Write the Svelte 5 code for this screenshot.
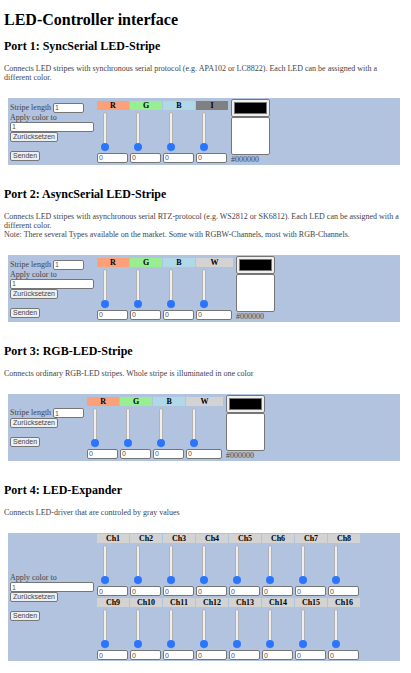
<script>
  const rgb = [
    { name: 'R', tone: 'red' },
    { name: 'G', tone: 'green' },
    { name: 'B', tone: 'blue' },
  ];
  const expander = Array.from({ length: 16 }, (_, i) => ({ name: `Ch${i + 1}`, tone: 'light' }));

  const ports = [
    {
      id: 1,
      title: 'Port 1: SyncSerial LED-Stripe',
      lines: [
        'Connects LED stripes with synchronous serial protocol (e.g. APA102 or LC8822). Each LED can be assigned with a different color.',
      ],
      length: true,
      apply: true,
      color: true,
      rows: [[...rgb, { name: 'I', tone: 'gray' }]],
    },
    {
      id: 2,
      title: 'Port 2: AsyncSerial LED-Stripe',
      lines: [
        'Connects LED stripes with asynchronous serial RTZ-protocol (e.g. WS2812 or SK6812). Each LED can be assigned with a different color.',
        'Note: There several Types available on the market. Some with RGBW-Channels, most with RGB-Channels.',
      ],
      length: true,
      apply: true,
      color: true,
      rows: [[...rgb, { name: 'W', tone: 'light', wide: true }]],
    },
    {
      id: 3,
      title: 'Port 3: RGB-LED-Stripe',
      lines: ['Connects ordinary RGB-LED stripes. Whole stripe is illuminated in one color'],
      length: true,
      apply: false,
      color: true,
      rows: [[...rgb, { name: 'W', tone: 'light', wide: true }]],
    },
    {
      id: 4,
      title: 'Port 4: LED-Expander',
      lines: ['Connects LED-driver that are controled by gray values'],
      length: false,
      apply: true,
      color: false,
      rows: [expander.slice(0, 8), expander.slice(8)],
    },
  ];

  let values = $state({});
  let colors = $state({ 1: '#000000', 2: '#000000', 3: '#000000' });

  const key = (port, channel) => `p${port.id}-${channel.name}`;
  const setValue = (k, e) => (values[k] = e.currentTarget.value);

  function reset(port) {
    for (const row of port.rows) for (const c of row) values[key(port, c)] = '0';
    if (port.color) colors[port.id] = '#000000';
  }
</script>

<main>
  <h1>LED-Controller interface</h1>

  {#each ports as port (port.id)}
    <section>
      <h2>{port.title}</h2>
      <div class="about">
        {#each port.lines as line}<p>{line}</p>{/each}
      </div>

      <form class="panel" onsubmit={(e) => e.preventDefault()}>
        <div class="settings">
          {#if port.length}
            <div class="length">
              <label for="length-{port.id}">Stripe length</label>
              <input id="length-{port.id}" class="text" type="text" value="1" />
            </div>
          {/if}
          {#if port.apply}
            <label class="apply" for="apply-{port.id}">Apply color to</label>
            <input id="apply-{port.id}" class="text target" type="text" value="1" />
          {/if}
          <button type="button" onclick={() => reset(port)}>Zurücksetzen</button>
          <button class="send" type="submit">Senden</button>
        </div>

        <div class="bank">
          {#each port.rows as row}
            <div class="row">
              {#each row as channel (channel.name)}
                {@const k = key(port, channel)}
                <div class="channel" class:wide={channel.wide}>
                  <label class="name {channel.tone}" for={k}>{channel.name}</label>
                  <input
                    class="slider"
                    type="range"
                    min="0"
                    max="255"
                    aria-label="{channel.name} level"
                    value={values[k] ?? '0'}
                    oninput={(e) => setValue(k, e)}
                  />
                  <input
                    id={k}
                    class="text value"
                    type="text"
                    value={values[k] ?? '0'}
                    oninput={(e) => setValue(k, e)}
                  />
                </div>
              {/each}
            </div>
          {/each}
        </div>

        {#if port.color}
          <div class="picker">
            <input id="color-{port.id}" type="color" bind:value={colors[port.id]} />
            <div class="preview"></div>
            <label for="color-{port.id}">{colors[port.id]}</label>
          </div>
        {/if}
      </form>
    </section>
  {/each}
</main>

<style>
  :global(body) {
    margin: 0;
    background: #fff;
  }

  main {
    padding: 11px 11px 11px 4px;
    font-family: 'Liberation Serif', 'Times New Roman', serif;
    font-size: 8px;
    line-height: 9px;
    color: #444;
  }

  h1,
  h2 {
    margin: 0;
    color: #000;
    font-weight: bold;
  }

  h1 {
    font-size: 16px;
    line-height: 18px;
  }

  h2 {
    font-size: 12px;
    line-height: 14px;
  }

  section {
    padding-top: 10px;
  }

  section + section {
    padding-top: 22px;
  }

  .about {
    margin: 11px 0 16px;
  }

  p {
    margin: 0;
  }

  .panel {
    display: flex;
    align-items: center;
    gap: 3px;
    margin-left: 4px;
    padding: 1px 2px;
    background: #b2c3e0;
  }

  .settings {
    display: flex;
    flex-direction: column;
    align-items: flex-start;
  }

  .length {
    display: flex;
    gap: 2px;
  }

  input,
  button {
    box-sizing: border-box;
    margin: 0;
    font-family: 'Liberation Sans', Arial, sans-serif;
    font-size: 7px;
    line-height: 8px;
    color: #555;
  }

  .text {
    height: 10px;
    padding: 0 1px;
    border: 1px solid #767676;
    border-radius: 2px;
    background: #fff;
  }

  .length .text {
    width: 31px;
  }

  .target {
    width: 84px;
  }

  button {
    height: 10px;
    padding: 0 2px;
    border: 1px solid #767676;
    border-radius: 2px;
    background: #efefef;
    color: #444;
  }

  .send {
    margin-top: 9px;
  }

  .bank {
    display: flex;
    flex-direction: column;
    gap: 2px;
  }

  .row {
    display: flex;
    gap: 1px;
  }

  .channel {
    display: flex;
    flex-direction: column;
    align-items: flex-start;
    width: 32px;
  }

  .wide {
    width: 37px;
  }

  .name {
    width: 100%;
    color: #000;
    font-weight: bold;
    text-align: center;
  }

  .red {
    background: #fca07a;
  }

  .green {
    background: #98ee90;
  }

  .blue {
    background: #b0d8e6;
  }

  .gray {
    background: #808080;
  }

  .light {
    background: #d3d3d3;
  }

  .slider {
    appearance: none;
    writing-mode: vertical-lr;
    direction: rtl;
    width: 8px;
    height: 40px;
    margin: 2px 0 1px 4px;
    background: transparent;
  }

  .slider::-webkit-slider-runnable-track {
    box-sizing: border-box;
    width: 4px;
    height: 100%;
    border: 1px solid #b2b2b2;
    border-radius: 2px;
    background: #efefef;
  }

  .slider::-webkit-slider-thumb {
    appearance: none;
    width: 8px;
    height: 8px;
    margin-left: -3px;
    border-radius: 50%;
    background: #2a75ff;
  }

  .value {
    width: calc(100% - 1px);
  }

  .picker {
    display: flex;
    flex-direction: column;
    align-items: flex-start;
  }

  .picker input {
    width: 39px;
    height: 18px;
    padding: 2px;
    border: 1px solid #767676;
    border-radius: 2px;
    background: #efefef;
  }

  .picker input::-webkit-color-swatch-wrapper {
    padding: 0;
  }

  .picker input::-webkit-color-swatch {
    border: 1px solid #767676;
    border-radius: 0;
  }

  .preview {
    box-sizing: border-box;
    width: 39px;
    height: 38px;
    border: 1px solid #767676;
    border-radius: 2px;
    background: #fff;
  }
</style>
